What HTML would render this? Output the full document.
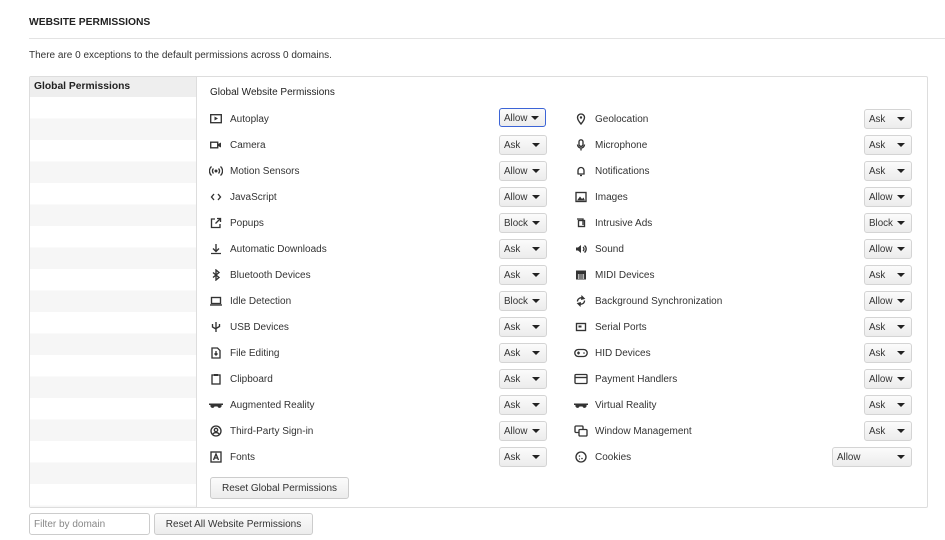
<!DOCTYPE html>
<html><head><meta charset="utf-8"><style>
body{margin:0;width:945px;height:540px;background:#fff;font-family:"Liberation Sans",sans-serif;color:#333;position:relative;overflow:hidden}
.a{position:absolute}
h1{position:absolute;left:29px;top:17px;margin:0;font-size:10.3px;font-weight:bold;color:#222}
.hr{position:absolute;left:29px;right:0;top:38px;height:1px;background:#e3e3e3}
.box{position:absolute;left:29px;top:76px;width:897px;height:430px;border:1px solid #ddd;border-radius:2px}
.side{position:absolute;left:30px;top:77px;width:166px;height:430px;border-right:1px solid #ddd;background:repeating-linear-gradient(#fff 0 21.5px,#f6f6f6 21.5px 43px);background-position:0 20px}
.sh{position:absolute;left:30px;top:77px;width:166px;height:20px;background:#eee;font-size:10.3px;font-weight:bold;color:#222;line-height:20px;text-indent:4px}
.l{position:absolute;font-size:10px;color:#333;line-height:14px;padding-top:1px}
.s{position:absolute;width:46px;height:18px;border:1px solid #d4d4d4;border-radius:3px;background:linear-gradient(#fbfbfb,#ececec);font-size:9.8px;line-height:20px;text-indent:4px;color:#333;box-sizing:content-box}
.s:after{content:"";position:absolute;right:6px;top:7px;border:4px solid transparent;border-top:4px solid #222;border-bottom:0}
.ic{position:absolute;width:12px;height:12px}
.ic *{stroke-width:1.35}
.btn{position:absolute;border:1px solid #ccc;border-radius:3px;background:linear-gradient(#fbfbfb,#ececec);font-size:10px;text-align:center;color:#333}
</style></head><body>
<h1>WEBSITE PERMISSIONS</h1>
<div class="hr"></div>
<div class="a" style="left:29px;top:50px;font-size:10px">There are 0 exceptions to the default permissions across 0 domains.</div>
<div class="box"></div>
<div class="side"></div>
<div class="sh">Global Permissions</div>
<div class="a" style="left:210px;top:87px;font-size:10px;color:#222">Global Website Permissions</div>

<div class="l" style="left:230px;top:112px">Autoplay</div>
<div class="l" style="left:230px;top:138px">Camera</div>
<div class="l" style="left:230px;top:164px">Motion Sensors</div>
<div class="l" style="left:230px;top:190px">JavaScript</div>
<div class="l" style="left:230px;top:216px">Popups</div>
<div class="l" style="left:230px;top:242px">Automatic Downloads</div>
<div class="l" style="left:230px;top:268px">Bluetooth Devices</div>
<div class="l" style="left:230px;top:294px">Idle Detection</div>
<div class="l" style="left:230px;top:320px">USB Devices</div>
<div class="l" style="left:230px;top:346px">File Editing</div>
<div class="l" style="left:230px;top:372px">Clipboard</div>
<div class="l" style="left:230px;top:398px">Augmented Reality</div>
<div class="l" style="left:230px;top:424px">Third-Party Sign-in</div>
<div class="l" style="left:230px;top:450px">Fonts</div>

<svg class="ic" style="left:210px;top:113px" viewBox="0 0 12 12"><rect x=".7" y="1.7" width="10.6" height="8" fill="none" stroke="#333"/><path d="M4.5 3.5v4l3.5-2z" fill="#333" stroke="none"/></svg>
<svg class="ic" style="left:210px;top:139px" viewBox="0 0 12 12"><rect x=".7" y="3.2" width="7" height="5.6" fill="none" stroke="#333"/><path d="M8 5l3-1.5v5L8 7z" fill="#333" stroke="none"/></svg>
<svg class="ic" style="left:209px;top:165px;width:14px" viewBox="0 0 14 12"><circle cx="7" cy="6" r="1.5" fill="#333" stroke="none"/><path d="M4.5 3.5a3.5 3.5 0 000 5M9.5 3.5a3.5 3.5 0 010 5M2.5 1.5a6 6 0 000 9M11.5 1.5a6 6 0 010 9" fill="none" stroke="#333"/></svg>
<svg class="ic" style="left:210px;top:191px" viewBox="0 0 12 12"><path d="M4 3L1.5 6 4 9M8 3l2.5 3L8 9" fill="none" stroke="#333"/></svg>
<svg class="ic" style="left:210px;top:217px" viewBox="0 0 12 12"><path d="M5 2H1.5v8.5H10V7M7 1.5h3.5V5M10.5 1.5L5.5 6.5" fill="none" stroke="#333"/></svg>
<svg class="ic" style="left:210px;top:243px" viewBox="0 0 12 12"><path d="M6 1v7M3 5.5L6 8.5 9 5.5M1 10.5h10" fill="none" stroke="#333"/></svg>
<svg class="ic" style="left:210px;top:269px" viewBox="0 0 12 12"><path d="M3 3.5l6 5L6 11V1l3 2.5-6 5" fill="none" stroke="#333"/></svg>
<svg class="ic" style="left:210px;top:295px" viewBox="0 0 12 12"><rect x="1.5" y="2.5" width="9" height="6" fill="none" stroke="#333"/><path d="M0 10h12" stroke="#333"/></svg>
<svg class="ic" style="left:210px;top:321px" viewBox="0 0 12 12"><path d="M6 11V1M2.5 3v3l3.5 2M9.5 3v2.5L6 7.5" fill="none" stroke="#333"/></svg>
<svg class="ic" style="left:210px;top:347px" viewBox="0 0 12 12"><path d="M2 1h5.5L10 3.5V11H2z" fill="none" stroke="#333"/><path d="M6 4v4M4.5 6.5L6 8l1.5-1.5" fill="none" stroke="#333"/></svg>
<svg class="ic" style="left:210px;top:373px" viewBox="0 0 12 12"><rect x="2" y="2" width="8" height="9" fill="none" stroke="#333"/><rect x="4" y="1" width="4" height="2" fill="#333" stroke="none"/></svg>
<svg class="ic" style="left:209px;top:399px;width:14px" viewBox="0 0 14 12"><path d="M0 4.5h14v1.5h-1.5a2 2 0 01-4 1.5H5.5a2 2 0 01-4-1.5H0z" fill="#333" stroke="none"/></svg>
<svg class="ic" style="left:210px;top:425px" viewBox="0 0 12 12"><circle cx="6" cy="6" r="5" fill="none" stroke="#333"/><circle cx="6" cy="5" r="1.7" fill="none" stroke="#333"/><path d="M3 9a3.5 3 0 016 0" fill="none" stroke="#333"/></svg>
<svg class="ic" style="left:210px;top:451px" viewBox="0 0 12 12"><rect x="1" y="1" width="10" height="10" fill="none" stroke="#333"/><path d="M3.5 9L6 3l2.5 6M4.5 7h3" fill="none" stroke="#333"/></svg>

<div class="l" style="left:595px;top:112px">Geolocation</div>
<div class="l" style="left:595px;top:138px">Microphone</div>
<div class="l" style="left:595px;top:164px">Notifications</div>
<div class="l" style="left:595px;top:190px">Images</div>
<div class="l" style="left:595px;top:216px">Intrusive Ads</div>
<div class="l" style="left:595px;top:242px">Sound</div>
<div class="l" style="left:595px;top:268px">MIDI Devices</div>
<div class="l" style="left:595px;top:294px">Background Synchronization</div>
<div class="l" style="left:595px;top:320px">Serial Ports</div>
<div class="l" style="left:595px;top:346px">HID Devices</div>
<div class="l" style="left:595px;top:372px">Payment Handlers</div>
<div class="l" style="left:595px;top:398px">Virtual Reality</div>
<div class="l" style="left:595px;top:424px">Window Management</div>
<div class="l" style="left:595px;top:450px">Cookies</div>

<svg class="ic" style="left:575px;top:113px" viewBox="0 0 12 12"><path d="M6 11C3 7.5 2.5 6 2.5 4.5a3.5 3.5 0 017 0C9.5 6 9 7.5 6 11z" fill="none" stroke="#333"/><circle cx="6" cy="4.5" r="1.2" fill="#333" stroke="none"/></svg>
<svg class="ic" style="left:575px;top:139px" viewBox="0 0 12 12"><rect x="4" y="0.8" width="4" height="6.5" rx="2" fill="none" stroke="#333"/><path d="M2.5 5.5a3.5 3.5 0 007 0M6 9v2.5" fill="none" stroke="#333"/></svg>
<svg class="ic" style="left:575px;top:165px" viewBox="0 0 12 12"><path d="M3 9V5.5a3 3 0 016 0V9H2.5h7" fill="none" stroke="#333"/><path d="M5 10.5h2" stroke="#333"/></svg>
<svg class="ic" style="left:575px;top:191px" viewBox="0 0 12 12"><rect x="1" y="1.5" width="10" height="9" fill="none" stroke="#333"/><path d="M2 9.5l3-4 2 2.5 1.5-1.5 1.5 3z" fill="#333" stroke="none"/></svg>
<svg class="ic" style="left:575px;top:217px" viewBox="0 0 12 12"><path d="M2 2h6v6" fill="none" stroke="#333"/><rect x="3.5" y="3.5" width="6" height="6" fill="none" stroke="#333"/></svg>
<svg class="ic" style="left:575px;top:243px" viewBox="0 0 12 12"><path d="M1 4.5h2l3-2.5v8L3 7.5H1z" fill="#333" stroke="none"/><path d="M8 4a2.5 2.5 0 010 4M9.5 2.5a4.5 4.5 0 010 7" fill="none" stroke="#333"/></svg>
<svg class="ic" style="left:575px;top:269px" viewBox="0 0 12 12"><rect x="1" y="1.5" width="10" height="9" fill="#333" stroke="none"/><path d="M3.3 5v5M5 5v5M7 5v5M8.7 5v5" stroke="#fff" style="stroke-width:.7"/></svg>
<svg class="ic" style="left:575px;top:295px" viewBox="0 0 12 12"><path d="M2.5 6.5a3.5 3.5 0 015.5-3M9.5 5.5a3.5 3.5 0 01-5.5 3" fill="none" stroke="#333"/><path d="M7 1.5l2 2-2.2.6zM5 10.5l-2-2 2.2-.6z" fill="#333" stroke="#333"/></svg>
<svg class="ic" style="left:575px;top:321px" viewBox="0 0 12 12"><rect x="1.5" y="2.5" width="9" height="7" fill="none" stroke="#333"/><rect x="3.5" y="4.5" width="3" height="2" fill="#333" stroke="none"/></svg>
<svg class="ic" style="left:574px;top:347px;width:14px" viewBox="0 0 14 12"><rect x=".8" y="2.5" width="12.4" height="7" rx="3.5" fill="none" stroke="#333"/><path d="M3 6h3M4.5 4.5v3" stroke="#333"/><circle cx="10" cy="6" r=".8" fill="#333" stroke="none"/></svg>
<svg class="ic" style="left:574px;top:373px;width:14px" viewBox="0 0 14 12"><rect x="1" y="1.5" width="12" height="9" rx="1" fill="none" stroke="#333"/><path d="M1 4.5h12" stroke="#333"/></svg>
<svg class="ic" style="left:574px;top:399px;width:14px" viewBox="0 0 14 12"><path d="M0 4.5h14v1.5h-1.5a2 2 0 01-4 1.5H5.5a2 2 0 01-4-1.5H0z" fill="#333" stroke="none"/></svg>
<svg class="ic" style="left:574px;top:425px;width:14px" viewBox="0 0 14 12"><rect x="1" y="1" width="8" height="6.5" rx="1" fill="none" stroke="#333"/><rect x="5" y="4.5" width="8" height="6.5" rx="1" fill="#fff" stroke="#333"/></svg>
<svg class="ic" style="left:575px;top:451px" viewBox="0 0 12 12"><circle cx="6" cy="6" r="5" fill="none" stroke="#333"/><circle cx="4.5" cy="5" r=".8" fill="#333" stroke="none"/><circle cx="7" cy="7.5" r=".8" fill="#333" stroke="none"/><circle cx="4.5" cy="8" r=".6" fill="#333" stroke="none"/></svg>

<div class="s" style="left:499px;top:108px;border:1.5px solid #3c64d6;height:17px;width:45px">Allow</div>
<div class="s" style="left:499px;top:135px">Ask</div>
<div class="s" style="left:499px;top:161px">Allow</div>
<div class="s" style="left:499px;top:187px">Allow</div>
<div class="s" style="left:499px;top:213px">Block</div>
<div class="s" style="left:499px;top:239px">Ask</div>
<div class="s" style="left:499px;top:265px">Ask</div>
<div class="s" style="left:499px;top:291px">Block</div>
<div class="s" style="left:499px;top:317px">Ask</div>
<div class="s" style="left:499px;top:343px">Ask</div>
<div class="s" style="left:499px;top:369px">Ask</div>
<div class="s" style="left:499px;top:395px">Ask</div>
<div class="s" style="left:499px;top:421px">Allow</div>
<div class="s" style="left:499px;top:447px">Ask</div>

<div class="s" style="left:864px;top:109px">Ask</div>
<div class="s" style="left:864px;top:135px">Ask</div>
<div class="s" style="left:864px;top:161px">Ask</div>
<div class="s" style="left:864px;top:187px">Allow</div>
<div class="s" style="left:864px;top:213px">Block</div>
<div class="s" style="left:864px;top:239px">Allow</div>
<div class="s" style="left:864px;top:265px">Ask</div>
<div class="s" style="left:864px;top:291px">Allow</div>
<div class="s" style="left:864px;top:317px">Ask</div>
<div class="s" style="left:864px;top:343px">Ask</div>
<div class="s" style="left:864px;top:369px">Allow</div>
<div class="s" style="left:864px;top:395px">Ask</div>
<div class="s" style="left:864px;top:421px">Ask</div>
<div class="s" style="left:832px;top:447px;width:78px">Allow</div>

<div class="btn" style="left:210px;top:477px;width:137px;height:20px;line-height:21px">Reset Global Permissions</div>
<div class="a" style="left:29px;top:513px;width:119px;height:20px;border:1px solid #ccc;border-radius:3px;font-size:10px;line-height:21px;color:#888;text-indent:4px">Filter by domain</div>
<div class="btn" style="left:154px;top:513px;width:157px;height:20px;line-height:21px">Reset All Website Permissions</div>
</body></html>
